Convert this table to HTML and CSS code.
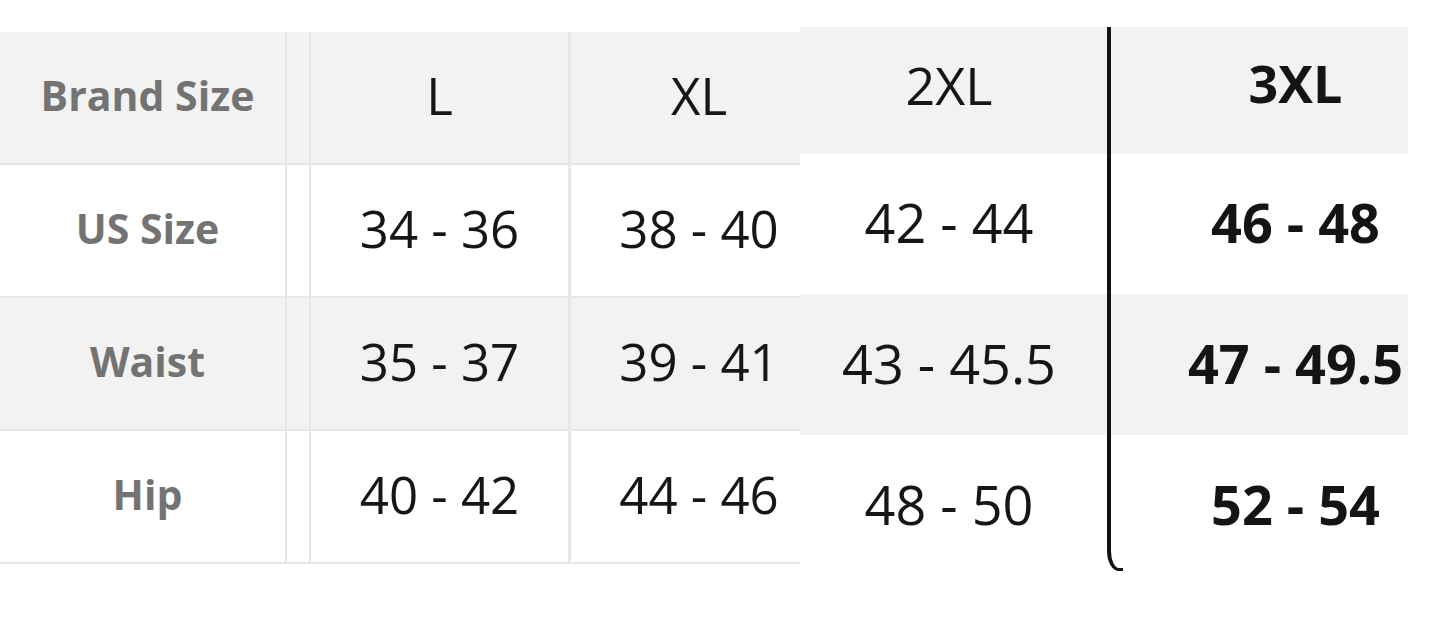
FILE: index.html
```html
<!DOCTYPE html>
<html lang="en">
<head>
<meta charset="utf-8">
<title>Size Chart</title>
<link rel="stylesheet" href="styles.css">
</head>
<body>
<div class="chart">
  <div class="left-table">
    <div class="cell label gray c1">Brand Size</div>
    <div class="cell gray c2"></div>
    <div class="cell value gray c3">L</div>
    <div class="cell value gray c4">XL</div>

    <div class="cell label c1">US Size</div>
    <div class="cell c2"></div>
    <div class="cell value c3">34 - 36</div>
    <div class="cell value c4">38 - 40</div>

    <div class="cell label gray c1">Waist</div>
    <div class="cell gray c2"></div>
    <div class="cell value gray c3">35 - 37</div>
    <div class="cell value gray c4">39 - 41</div>

    <div class="cell label c1">Hip</div>
    <div class="cell c2"></div>
    <div class="cell value c3">40 - 42</div>
    <div class="cell value c4">44 - 46</div>
  </div>

  <div class="right-table">
    <div class="rcell gray r-head c-2xl">2XL</div>
    <div class="rcell gray r-head c-3xl bold">3XL</div>

    <div class="rcell r-2 c-2xl">42 - 44</div>
    <div class="rcell r-2 c-3xl bold">46 - 48</div>

    <div class="rcell gray r-3 c-2xl">43 - 45.5</div>
    <div class="rcell gray r-3 c-3xl bold">47 - 49.5</div>

    <div class="rcell r-4 c-2xl">48 - 50</div>
    <div class="rcell r-4 c-3xl c-end bold">52 - 54</div>
  </div>
</div>
</body>
</html>
```

FILE: styles.css
```css
* {
  box-sizing: border-box;
}

body {
  margin: 0;
  background: #ffffff;
  font-family: "Open Sans", "Noto Sans", "DejaVu Sans", sans-serif;
  color: #1a1a1a;
}

.chart {
  display: flex;
  align-items: flex-start;
  width: 1445px;
  height: 617px;
  overflow: hidden;
}

/* ---------- left table ---------- */
.left-table {
  margin-top: 32px;
  width: 800px;
  display: grid;
  grid-template-columns: 287px 24px 260px 229px;
  grid-auto-rows: 133px;
}

.cell {
  display: flex;
  align-items: center;
  justify-content: center;
  border-bottom: 2px solid #e7e7e7;
  background: #ffffff;
  white-space: nowrap;
  padding-bottom: 5px;
}

.cell.gray {
  background: #f2f2f2;
}

.c1 {
  border-right: 2px solid #e7e7e7;
  padding-left: 10px;
}

.c2 {
  border-right: 2px solid #e7e7e7;
}

.c3 {
  border-right: 3px solid #e7e7e7;
}

.c4 {
  padding-left: 27px;
}

.label {
  font-size: 41px;
  font-weight: 700;
  color: #737373;
}

.value {
  font-size: 51px;
  font-weight: 400;
  color: #161616;
}

/* ---------- right table ---------- */
.right-table {
  margin-top: 27px;
  width: 608px;
  display: grid;
  grid-template-columns: 307px 301px;
  grid-template-rows: 127px 140px 141px 135px;
}

.rcell {
  display: flex;
  align-items: center;
  justify-content: center;
  background: #ffffff;
  font-size: 54px;
  font-weight: 400;
  color: #161616;
  white-space: nowrap;
  padding-bottom: 4px;
}

.rcell.gray {
  background: #f2f2f2;
}

.rcell.bold {
  font-weight: 700;
  color: #141414;
}

.c-2xl {
  padding-right: 9px;
}

.c-3xl {
  border-left: 4px solid #121212;
  padding-left: 72px;
}

.r-head {
  padding-bottom: 13px;
  font-size: 52px;
}

.r-head.bold {
  padding-bottom: 17px;
}

.r-4 {
  padding-top: 6px;
}

.c-end {
  position: relative;
  border-left-color: transparent;
}

.c-end::before {
  content: "";
  position: absolute;
  left: -4px;
  top: 0;
  bottom: -1px;
  width: 12px;
  border-left: 4px solid #121212;
  border-bottom: 3px solid #121212;
  border-bottom-left-radius: 12px 20px;
}
```
